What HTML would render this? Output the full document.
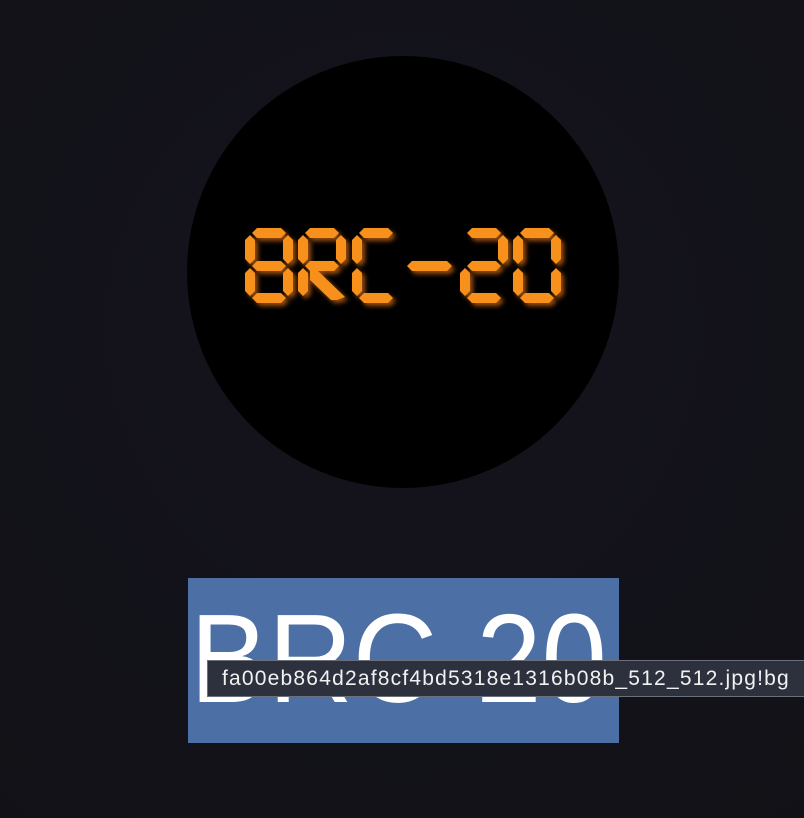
<!DOCTYPE html>
<html><head><style>
html,body{margin:0;padding:0;width:804px;height:818px;overflow:hidden;background:radial-gradient(circle at 403px 330px,#16141f 0,#121219 400px,#111116 700px);font-family:"Liberation Sans",sans-serif;}
.circ{position:absolute;left:187px;top:56px;width:432px;height:432px;border-radius:50%;background:#000;}
svg{position:absolute;left:0;top:0}
.box{position:absolute;left:188px;top:578px;width:431px;height:165px;background:#4c70a5;overflow:hidden}
.big{position:absolute;left:2px;top:6px;font-size:126px;color:#fff;line-height:150px;white-space:nowrap;transform:scaleX(0.93);transform-origin:0 0}
.tip{position:absolute;left:207px;top:660px;width:600px;height:37px;background:#2c313d;border:1px solid #6b6f78;box-sizing:border-box;color:#f2f2f2;font-size:21px;line-height:35px;padding-left:14px;white-space:nowrap;letter-spacing:1.2px}
</style></head><body>
<div class="circ"></div>
<svg width="804" height="818">
<defs><filter id="g" x="-20%" y="-20%" width="140%" height="140%"><feFlood flood-color="#9a4e08"/><feComposite operator="in" in2="SourceAlpha"/><feGaussianBlur stdDeviation="2.5"/><feOffset dx="3" dy="3"/><feMerge><feMergeNode/><feMergeNode in="SourceGraphic"/></feMerge></filter></defs>
<g id="segs" fill="#f7911c" filter="url(#g)"></g>
</svg>
<div class="box"><div class="big">BRC-20</div></div>
<div class="tip">fa00eb864d2af8cf4bd5318e1316b08b_512_512.jpg!bg</div>
<script>
var t=10,h=t/2,out="";
function H(x1,x2,y){out+='<polygon points="'+[x1,y,x1+h,y-h,x2-h,y-h,x2,y,x2-h,y+h,x1+h,y+h].join(",")+'"/>';}
function V(x,y1,y2){out+='<polygon points="'+[x,y1,x+h,y1+h,x+h,y2-h,x,y2,x-h,y2-h,x-h,y1+h].join(",")+'"/>';}
function ch(x0,s){var L=x0+5,R=x0+43;
 if(s.indexOf('a')>=0)H(L+2,R-2,233);
 if(s.indexOf('f')>=0)V(L,235,264);
 if(s.indexOf('b')>=0)V(R,235,264);
 if(s.indexOf('g')>=0)H(L+2,R-2,266);
 if(s.indexOf('e')>=0)V(L,268,296);
 if(s.indexOf('c')>=0)V(R,268,296);
 if(s.indexOf('d')>=0)H(L+2,R-2,298);}
ch(245,'abcdefg');ch(298,'abfge');ch(352,'afed');ch(460,'abged');ch(513,'abcdef');
H(407,452,266);
out+='<polygon points="310,271 318,271 345,297 337,300 331,300 310,280"/>';
document.getElementById('segs').innerHTML=out;
</script>
</body></html>
